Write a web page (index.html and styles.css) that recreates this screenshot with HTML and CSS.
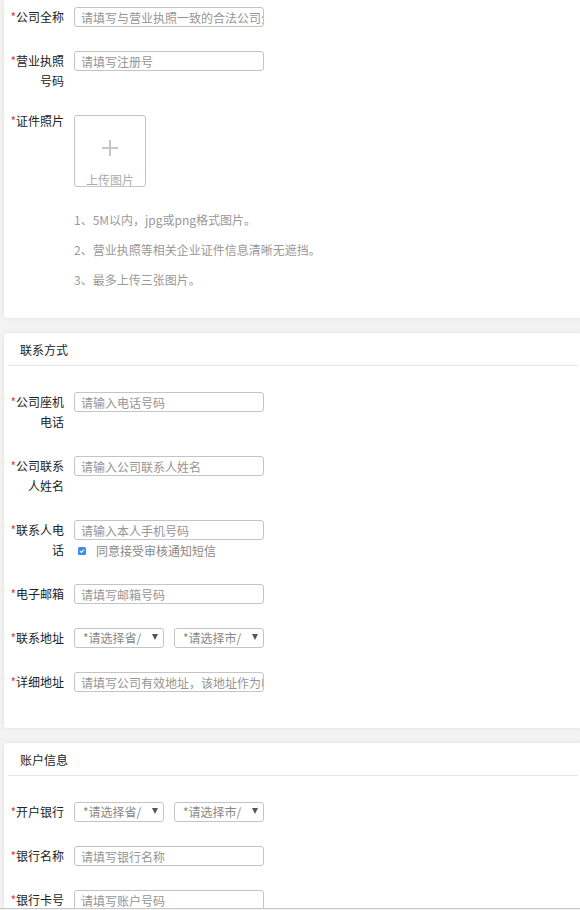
FILE: index.html
```html
<!DOCTYPE html>
<html lang="zh-CN">
<head>
<meta charset="utf-8">
<title>企业认证</title>
<link rel="stylesheet" href="styles.css">
</head>
<body>
<div class="page">
  <section class="card card-first">
    <div class="card-body body-first">
      <div class="row">
        <label class="label"><span class="req">*</span>公司全称</label>
        <input class="input" type="text" placeholder="请填写与营业执照一致的合法公司全称">
      </div>
      <div class="row">
        <label class="label"><span class="req">*</span>营业执照号码</label>
        <input class="input" type="text" placeholder="请填写注册号">
      </div>
      <div class="row row-upload">
        <label class="label label-upload"><span class="req">*</span>证件照片</label>
        <div class="upload">
          <svg class="plus" width="16" height="16" viewBox="0 0 16 16"><path d="M8 0v16M0 8h16" stroke="#c6c6c6" stroke-width="2" fill="none"/></svg>
          <span class="upload-text">上传图片</span>
        </div>
      </div>
      <ul class="hints">
        <li>1、5M以内，jpg或png格式图片。</li>
        <li>2、营业执照等相关企业证件信息清晰无遮挡。</li>
        <li>3、最多上传三张图片。</li>
      </ul>
    </div>
  </section>

  <section class="card card-contact">
    <div class="card-header">联系方式</div>
    <div class="divider"></div>
    <div class="card-body">
      <div class="row">
        <label class="label"><span class="req">*</span>公司座机电话</label>
        <input class="input" type="text" placeholder="请输入电话号码">
      </div>
      <div class="row">
        <label class="label"><span class="req">*</span>公司联系人姓名</label>
        <input class="input" type="text" placeholder="请输入公司联系人姓名">
      </div>
      <div class="row">
        <label class="label"><span class="req">*</span>联系人电话</label>
        <div class="field">
          <input class="input" type="text" placeholder="请输入本人手机号码">
          <div class="check-line">
            <svg class="check" width="8" height="8" viewBox="0 0 8 8"><rect x="0" y="0" width="8" height="8" rx="1.6" fill="#3b8cec"/><path d="M2 4.1l1.4 1.4L6 2.7" stroke="#fff" stroke-width="1.1" fill="none"/></svg>
            <span class="check-text">同意接受审核通知短信</span>
          </div>
        </div>
      </div>
      <div class="row">
        <label class="label"><span class="req">*</span>电子邮箱</label>
        <input class="input" type="text" placeholder="请填写邮箱号码">
      </div>
      <div class="row">
        <label class="label"><span class="req">*</span>联系地址</label>
        <div class="selects">
          <div class="select"><span class="select-text">*请选择省/</span><span class="arrow"></span></div>
          <div class="select"><span class="select-text">*请选择市/</span><span class="arrow"></span></div>
        </div>
      </div>
      <div class="row">
        <label class="label"><span class="req">*</span>详细地址</label>
        <input class="input" type="text" placeholder="请填写公司有效地址，该地址作为收件地址">
      </div>
    </div>
  </section>

  <section class="card">
    <div class="card-header">账户信息</div>
    <div class="divider"></div>
    <div class="card-body">
      <div class="row">
        <label class="label"><span class="req">*</span>开户银行</label>
        <div class="selects">
          <div class="select"><span class="select-text">*请选择省/</span><span class="arrow"></span></div>
          <div class="select"><span class="select-text">*请选择市/</span><span class="arrow"></span></div>
        </div>
      </div>
      <div class="row">
        <label class="label"><span class="req">*</span>银行名称</label>
        <input class="input" type="text" placeholder="请填写银行名称">
      </div>
      <div class="row">
        <label class="label"><span class="req">*</span>银行卡号</label>
        <input class="input" type="text" placeholder="请填写账户号码">
      </div>
    </div>
  </section>
</div>
<div class="bottom-line"></div>
</body>
</html>
```
FILE: styles.css
```css
html, body {
  margin: 0;
  padding: 0;
  overflow: hidden;
}
body {
  background: #f3f3f3;
  font-family: "Noto Sans CJK SC", "Microsoft YaHei", sans-serif;
  font-size: 12px;
  color: #333;
}
.page {
  padding-left: 4px;
  width: 600px;
}
.card {
  width: 580px;
  background: #fff;
  border-radius: 3px;
  box-shadow: 0 0 4px rgba(0, 0, 0, 0.08);
  margin-bottom: 15px;
}
.card-first {
  border-top-left-radius: 0;
  border-top-right-radius: 0;
}
.card-header {
  height: 32px;
  line-height: 34px;
  padding-left: 16px;
  color: #222;
}
.divider {
  height: 1px;
  background: #e6e6e6;
  margin: 0 6px 0 4px;
}
.card-body {
  padding: 26px 0 12px;
}
.body-first {
  padding: 7px 0 23px;
}
.row {
  display: flex;
  align-items: flex-start;
  margin-bottom: 24px;
}
.row-upload {
  margin-bottom: 0;
}
.label {
  flex-shrink: 0;
  width: 58px;
  margin-left: 2px;
  margin-right: 10px;
  text-align: right;
  line-height: 20px;
  color: #222;
}
.label-upload {
  margin-top: -4px;
}
.req {
  color: #e4393c;
}
.input {
  box-sizing: border-box;
  width: 190px;
  height: 20px;
  margin: 0;
  padding: 0 0 0 6px;
  border: 1px solid #c4c4c4;
  border-radius: 3px;
  font-family: inherit;
  font-size: 12px;
  color: #333;
  background: #fff;
  outline: none;
}
.input::placeholder {
  color: #959595;
}
.field {
  display: flex;
  flex-direction: column;
}
.check-line {
  display: flex;
  align-items: center;
  height: 18px;
  margin-top: 2px;
  padding-left: 4px;
}
.check {
  display: block;
  margin-right: 10px;
}
.check-text {
  color: #888;
  line-height: 18px;
}
.selects {
  display: flex;
  gap: 10px;
}
.select {
  box-sizing: border-box;
  width: 90px;
  height: 20px;
  display: flex;
  align-items: center;
  padding-left: 8px;
  border: 1px solid #c4c4c4;
  border-radius: 3px;
  background: #fff;
}
.select-text {
  white-space: nowrap;
  color: #888;
  line-height: 18px;
}
.arrow {
  margin-left: auto;
  margin-right: 5px;
  margin-top: -2px;
  width: 0;
  height: 0;
  border-left: 3px solid transparent;
  border-right: 3px solid transparent;
  border-top: 6px solid #555;
}
.upload {
  box-sizing: border-box;
  width: 72px;
  height: 72px;
  border: 1px solid #c4c4c4;
  border-radius: 3px;
  display: flex;
  flex-direction: column;
  align-items: center;
  overflow: hidden;
}
.plus {
  display: block;
  margin-top: 24px;
  flex-shrink: 0;
}
.upload-text {
  display: block;
  margin-top: 17px;
  line-height: 14px;
  color: #aaa;
  white-space: nowrap;
  flex-shrink: 0;
}
.hints {
  list-style: none;
  margin: 18px 0 0;
  padding: 0 0 0 70px;
  line-height: 30px;
  color: #999;
}
.bottom-line {
  position: fixed;
  left: 0;
  right: 0;
  bottom: 0;
  height: 1px;
  border-top: 1px solid #c8c8c8;
  background: #f3f3f3;
}
```
